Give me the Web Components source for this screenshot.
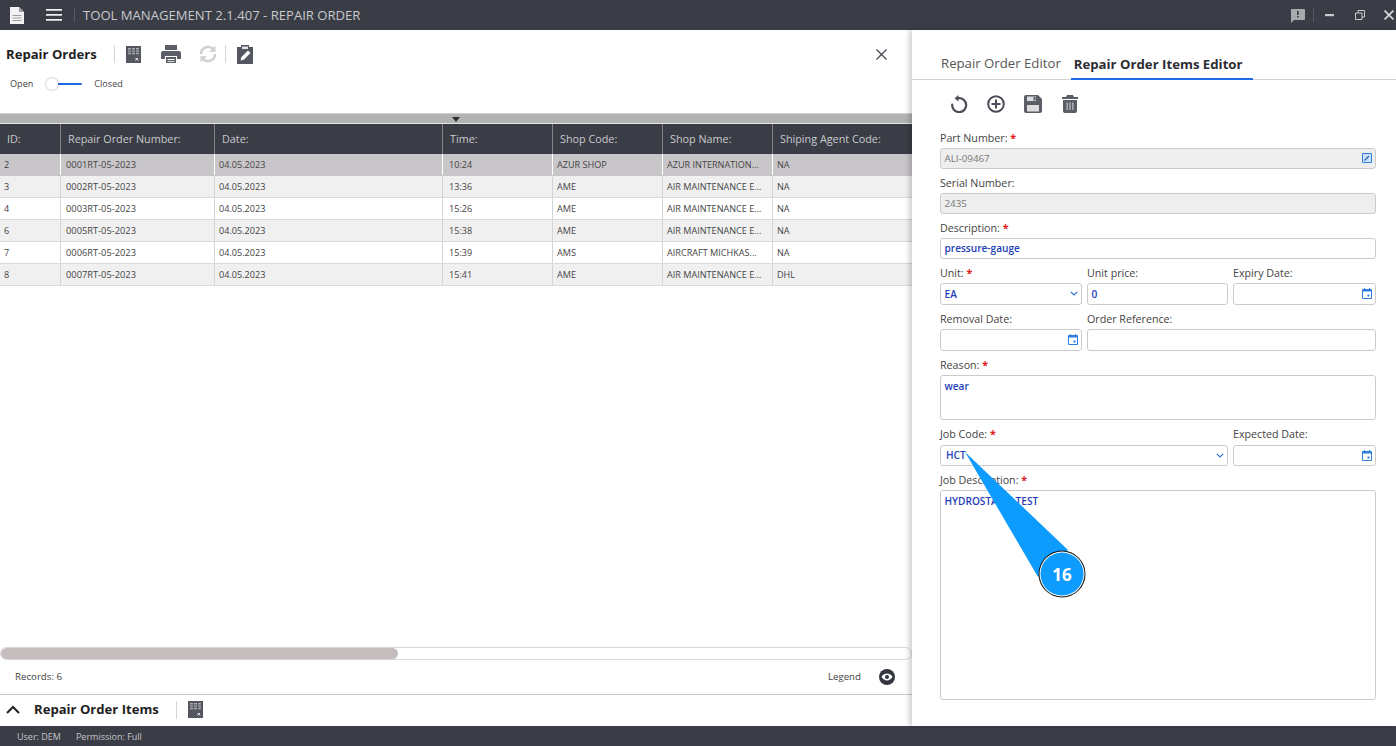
<!DOCTYPE html>
<html lang="en">
<head>
<meta charset="utf-8">
<title>Tool Management - Repair Order</title>
<style>
html,body{margin:0;padding:0;height:100%;overflow:hidden;background:#fff}
body{font-family:"Open Sans","Noto Sans",sans-serif;color:#333}
</style>
</head>
<body>
<app-shell></app-shell>
<script>
const ICONS={
 xls:'<svg viewBox="0 0 15 17" width="15" height="17"><path fill="#54575f" d="M0 0h15v17H0z"/><path fill="#a9abb0" d="M2 2h3v1.400H2zM6 2h3v1.400H6zM10 2h3v1.400h-3zM2 4.400h3v1.400H2zM6 4.400h3v1.400H6zM10 4.400h3v1.400h-3zM2 6.800h3v1.400H2zM6 6.800h3v1.400H6zM10 6.800h3v1.400h-3z"/><path stroke="#fff" stroke-width="1" d="M9.500 12l2.500 2.500M12 12l-2.500 2.500"/></svg>',
 print:'<svg viewBox="0 0 20 18" width="20" height="18"><path fill="#5b5e66" d="M4 0h12v5H4zM2 6h16a2 2 0 0 1 2 2v6h-4v-3H4v3H0V8a2 2 0 0 1 2-2z"/><path fill="#5b5e66" d="M5 12h10v6H5z"/><path fill="#fff" d="M6.500 14h7v1h-7zM6.500 16h7v.8h-7z"/></svg>',
 sync:'<svg viewBox="0 0 20 20" width="20" height="20" fill="none"><path stroke="#d2d2d4" stroke-width="2.600" d="M3 10a7 7 0 0 1 12-5M17 10a7 7 0 0 1-12 5"/><path fill="#d2d2d4" d="M17.500 1.500v6.500h-6.500zM2.500 18.500V12h6.500z"/></svg>',
 clip:'<svg viewBox="0 0 16 19" width="16" height="19"><path fill="#54575f" d="M0 2h4V0h8v2h4v17H0z"/><path fill="#e4e4e6" d="M5 1.500h6V4H5z"/><path fill="#fff" d="M3.500 15.500l1-3.500 6.500-6.500 2.500 2.500L7 14.500z"/></svg>',
 undo:'<svg viewBox="0 0 18 18" width="18" height="18" fill="none"><path stroke="#4c4f57" stroke-width="2.200" stroke-linecap="round" d="M8.500 3.200A7 7 0 1 1 2.200 9.500"/><path fill="#4c4f57" d="M8.500 0v6.400L4.500 3.200z"/></svg>',
 add:'<svg viewBox="0 0 18 18" width="18" height="18" fill="none" stroke="#4c4f57" stroke-width="2"><circle cx="9" cy="9" r="7.800"/><path d="M9 4.500v9M4.500 9h9"/></svg>',
 save:'<svg viewBox="0 0 18 18" width="18" height="18"><path fill="#5b5e66" d="M2 0h12l4 4v12a2 2 0 0 1-2 2H2a2 2 0 0 1-2-2V2a2 2 0 0 1 2-2z"/><path fill="#dcdcde" d="M3 1.500h9v4.500H3z"/><path fill="#5b5e66" d="M9.500 2h2v3.500h-2z"/><path fill="#dcdcde" d="M3 10h12v6.500H3z"/></svg>',
 trash:'<svg viewBox="0 0 16 18" width="16" height="18"><path fill="#5b5e66" d="M5 0h6l1 2h4v2H0V2h4zM1 5h14v11a2 2 0 0 1-2 2H3a2 2 0 0 1-2-2z"/><path fill="#fff" d="M4.500 7.500h1.400V15H4.500zM7.300 7.500h1.400V15H7.300zM10.100 7.500h1.400V15h-1.400z" opacity=".55"/></svg>',
 cal:'<svg viewBox="0 0 10 11" width="10" height="11"><path fill="#2f7de0" d="M2 0h1v1h4V0h1v1h1a1 1 0 0 1 1 1v8a1 1 0 0 1-1 1H1a1 1 0 0 1-1-1V2a1 1 0 0 1 1-1h1z"/><path fill="#fff" d="M1 3.500h8V10H1z"/><path fill="#2f7de0" d="M5.500 6.500h2v2h-2z"/></svg>',
 edit:'<svg viewBox="0 0 10 10" width="10" height="10"><path fill="#cfe2fb" stroke="#2f7de0" d="M.5.500h9v9h-9z"/><path stroke="#1f63c4" stroke-width="1.300" d="M2.500 7.500l4.500-4.500"/></svg>',
 chev:'<svg viewBox="0 0 8 5" width="8" height="5" fill="none"><path stroke="#2f6fcc" stroke-width="1.200" d="M.8.800L4 4l3.200-3.200"/></svg>'
};

class AppIcon extends HTMLElement{
 connectedCallback(){
  if(this.shadowRoot)return;
  const s=this.attachShadow({mode:'open'});
  s.innerHTML='<style>:host{display:inline-flex;align-items:center;justify-content:center;flex:none}svg{display:block}</style>'+(ICONS[this.getAttribute('name')]||'');
 }
}
customElements.define('app-icon',AppIcon);

class TitleBar extends HTMLElement{
 constructor(){super();this.attachShadow({mode:'open'}).innerHTML=`
 <style>
 :host{display:flex;align-items:center;height:30px;background:#3a3d46;color:#c9cacd;font-size:13.1px;flex:none}
 .doc{margin-left:10px;display:flex}
 .menu{margin-left:22px;display:flex}
 .sep{width:1px;height:14px;background:#565962;margin:0 8px 0 12px}
 .title{white-space:nowrap}
 .right{margin-left:auto;display:flex;align-items:center}
 .right svg{display:block}
 .rsep{width:1px;height:14px;background:#565962;margin:0 11px 0 8px}
 </style>
 <span class="doc"><svg width="14" height="17" viewBox="0 0 14 17"><path fill="#f2f2f3" d="M0 0h9l5 5v12H0z"/><path fill="#9a9ca2" d="M9 0l5 5H9zM2.500 8h9v1h-9zM2.500 10.500h9v1h-9zM2.500 13h9v1h-9z"/></svg></span>
 <span class="menu"><svg width="16" height="12" viewBox="0 0 16 12"><path fill="#eeeeef" d="M0 0h16v1.700H0zM0 5h16v1.700H0zM0 10h16v1.700H0z"/></svg></span>
 <span class="sep"></span>
 <span class="title">TOOL MANAGEMENT 2.1.407 - REPAIR ORDER</span>
 <span class="right">
  <svg width="15" height="15" viewBox="0 0 15 15"><path fill="#a8a9ad" d="M1 1h13a1 1 0 0 1 1 1v9a1 1 0 0 1-1 1H4l-3 3z"/><path fill="#3a3d46" d="M7 3h1.600v4H7zM7 8h1.600v1.600H7z"/></svg>
  <span class="rsep"></span>
  <svg style="margin-right:21px" width="9" height="3" viewBox="0 0 9 3"><path fill="#c9cacd" d="M0 0h9v2.200H0z"/></svg>
  <svg style="margin-right:19px" width="10" height="10" viewBox="0 0 10 10" fill="none"><path stroke="#c9cacd" d="M.5 3h6.500v6.500H.5zM3 3V.5h6.500V7H7"/></svg>
  <svg style="margin-right:2px" width="10" height="10" viewBox="0 0 9 9" fill="none"><path stroke="#d8d8da" stroke-width="1.500" d="M.5.500l8 8M8.500.500l-8 8"/></svg>
 </span>`;}
}
customElements.define('title-bar',TitleBar);

class PanelHead extends HTMLElement{
 constructor(){super();this.attachShadow({mode:'open'}).innerHTML=`
 <style>
 :host{display:flex;align-items:center;height:48px;flex:none;padding-left:6px;position:relative}
 b{font-size:13.1px;font-weight:700;color:#222;white-space:nowrap}
 .s{width:1px;height:18px;background:#d6d6d6}
 .x{margin-left:auto;margin-right:25px;display:flex}
 </style>
 <b>Repair Orders</b>
 <span class="s" style="margin:0 11px 0 17px"></span>
 <app-icon name="xls"></app-icon>
 <app-icon name="print" style="margin-left:20px"></app-icon>
 <app-icon name="sync" style="margin-left:17px"></app-icon>
 <span class="s" style="margin:0 11px 0 7px"></span>
 <app-icon name="clip"></app-icon>
 <span class="x"><svg width="11" height="11" viewBox="0 0 11 11" fill="none"><path stroke="#4a4d55" stroke-width="1.400" d="M.5.500l10 10M10.500.500l-10 10"/></svg></span>`;}
}
customElements.define('panel-head',PanelHead);

class ToggleRow extends HTMLElement{
 constructor(){super();this.attachShadow({mode:'open'}).innerHTML=`
 <style>
 :host{display:flex;align-items:center;height:12px;padding-left:10px;font-size:9.1px;color:#444;flex:none;margin-bottom:23px}
 .txt{padding-bottom:2px}
 .t{position:relative;width:36px;height:12px;margin:0 12px 0 13px;display:block}
 .l{position:absolute;left:8px;right:0;top:5px;height:2px;background:#2468e4;border-radius:1px}
 .k{position:absolute;left:0;top:0;width:12px;height:12px;border-radius:50%;background:#fff;box-shadow:0 0 2px rgba(0,0,0,.45)}
 </style>
 <span class="txt">Open</span><span class="t"><span class="l"></span><span class="k"></span></span><span class="txt">Closed</span>`;}
}
customElements.define('toggle-row',ToggleRow);

const COLS=[61,154,228,110,110,110,139];
const GRID_TPL=COLS.map(c=>c+'px').join(' ');
const HEAD=['ID:','Repair Order Number:','Date:','Time:','Shop Code:','Shop Name:','Shiping Agent Code:'];
const ROWS=[
['2','0001RT-05-2023','04.05.2023','10:24','AZUR SHOP','AZUR INTERNATION...','NA'],
['3','0002RT-05-2023','04.05.2023','13:36','AME','AIR MAINTENANCE E...','NA'],
['4','0003RT-05-2023','04.05.2023','15:26','AME','AIR MAINTENANCE E...','NA'],
['6','0005RT-05-2023','04.05.2023','15:38','AME','AIR MAINTENANCE E...','NA'],
['7','0006RT-05-2023','04.05.2023','15:39','AMS','AIRCRAFT MICHKAS...','NA'],
['8','0007RT-05-2023','04.05.2023','15:41','AME','AIR MAINTENANCE E...','DHL']];

class DataGrid extends HTMLElement{
 constructor(){super();
 const cells=r=>r.map(c=>`<span class="c">${c}</span>`).join('');
 this.attachShadow({mode:'open'}).innerHTML=`
 <style>
 :host{display:flex;flex-direction:column;flex:1;min-height:0}
 .grip{background:#b3b3b3;border-top:1px solid #d4d4d4;border-bottom:1px solid #e4e4e4;height:9px;display:flex;justify-content:center;align-items:center;flex:none}
 .grip i{width:0;height:0;border-left:4px solid transparent;border-right:4px solid transparent;border-top:5px solid #2e3138;display:block;margin-top:1px}
 .row{display:grid;grid-template-columns:${GRID_TPL};flex:none}
 .h{background:#3a3d46;color:#c9cacd;font-size:10.8px;height:30px}
 .h .c{display:flex;align-items:center;padding:0 0 2px 7px;border-right:1px solid #83858b;box-sizing:border-box;white-space:nowrap;overflow:hidden}
 .h .c:last-child{border:0}
 .r{height:22px;font-size:9.1px;color:#444;border-bottom:1px solid #d9d9d9;box-sizing:border-box}
 .r .c{display:flex;align-items:center;padding-left:4px;border-right:1px solid #d4d4d4;box-sizing:border-box;white-space:nowrap;overflow:hidden}
 .r .c:nth-child(2){padding-left:5px;font-size:9.3px}
 .r .c:nth-child(4){padding-left:6px}
 .r .c:last-child{border:0}
 .r.sel{border-bottom-color:#c9c6c9}
 .r.sel .c{border-right-color:#fff}
 .space{flex:1}
 .scroll{height:13px;flex:none;border:1px solid #d9d6d6;border-radius:7px;box-sizing:border-box;overflow:hidden;display:flex}
 .scroll i{display:block;width:397px;background:#c5bdbd;border-radius:6px}
 </style>
 <div class="grip"><i></i></div>
 <div class="row h">${cells(HEAD)}</div>
 ${ROWS.map((r,i)=>`<div class="row r ${i==0?'sel':''}" style="background:${i==0?'#c9c6c9':(i%2?'#f0f0f0':'#fff')}">${cells(r)}</div>`).join('')}
 <div class="space"></div>
 <div class="scroll"><i></i></div>`;}
}
customElements.define('data-grid',DataGrid);

class GridFooter extends HTMLElement{
 constructor(){super();this.attachShadow({mode:'open'}).innerHTML=`
 <style>
 :host{display:flex;align-items:center;height:35px;flex:none;font-size:9.7px;color:#444;padding:0 17px 1px 15px;border-bottom:1px solid #cbc8c8;box-sizing:border-box}
 .g{margin-left:auto;margin-right:18px}
 svg{display:block}
 </style>
 <span>Records: 6</span><span class="g">Legend</span>
 <svg width="16" height="16" viewBox="0 0 16 16"><circle cx="8" cy="8" r="8" fill="#33363e"/><path fill="#fff" d="M2.500 8c1.500-2.400 3.400-3.400 5.500-3.400S12 5.600 13.500 8c-1.500 2.400-3.400 3.400-5.500 3.400S4 10.400 2.500 8z"/><circle cx="8" cy="8" r="2" fill="#33363e"/></svg>`;}
}
customElements.define('grid-footer',GridFooter);

class ItemsBar extends HTMLElement{
 constructor(){super();this.attachShadow({mode:'open'}).innerHTML=`
 <style>
 :host{display:flex;align-items:center;height:31px;flex:none;padding:0 0 2px 6px;box-sizing:border-box}
 b{font-size:13.1px;font-weight:700;color:#222;margin-left:14px;white-space:nowrap;padding-bottom:2px}
 .s{width:1px;height:18px;background:#d6d6d6;margin:0 11px 0 17px}
 svg{display:block}
 </style>
 <svg width="14" height="9" viewBox="0 0 14 9" fill="none"><path stroke="#222" stroke-width="2" d="M1 8l6-6 6 6"/></svg>
 <b>Repair Order Items</b><span class="s"></span><app-icon name="xls"></app-icon>`;}
}
customElements.define('items-bar',ItemsBar);

class OrdersPanel extends HTMLElement{
 constructor(){super();this.attachShadow({mode:'open'}).innerHTML=`
 <style>:host{display:flex;flex-direction:column;width:912px;flex:none;min-height:0}</style>
 <panel-head></panel-head><toggle-row></toggle-row><data-grid></data-grid><grid-footer></grid-footer><items-bar></items-bar>`;}
}
customElements.define('orders-panel',OrdersPanel);

class EditorTabs extends HTMLElement{
 constructor(){super();this.attachShadow({mode:'open'}).innerHTML=`
 <style>
 :host{display:flex;height:50px;flex:none;border-bottom:1px solid #d4d2d2;box-sizing:border-box;padding-left:29px;font-size:13.2px;align-items:flex-end}
 span{display:block;height:30px;line-height:28px;white-space:nowrap;box-sizing:border-box;color:#555}
 .on{color:#2b2d33;font-weight:700;border-bottom:2px solid #1f6ae6;padding:0 10px 0 3px;margin-left:10px;font-size:13.2px;margin-bottom:-1px;height:31px;line-height:30px}
 </style>
 <span>Repair Order Editor</span><span class="on">Repair Order Items Editor</span>`;}
}
customElements.define('editor-tabs',EditorTabs);

class FormField extends HTMLElement{
 constructor(){super();this.attachShadow({mode:'open'});}
 connectedCallback(){
  const a=n=>this.getAttribute(n);
  const h=a('h')||21, icon=a('icon'), ro=this.hasAttribute('ro'), ml=h>30;
  const bold=!ro;
  this.shadowRoot.innerHTML=`
  <style>
  :host{display:flex;flex-direction:column;min-width:0;grid-column:span ${a('span')||1}}
  label{display:block;height:18px;line-height:${a('lh')||16}px;font-size:10.7px;color:#444;white-space:nowrap}
  label b{color:#e02020;font-weight:700}
  .box{box-sizing:border-box;height:${h}px;border:1px solid #cfcaca;border-radius:3px;background:${ro?'#eeeeee':'#fff'};display:flex;align-items:${ml?'flex-start':'center'};justify-content:space-between;padding:${ml?'3px':'0'} 3px ${ml?'0':'1px'} ${a('pl')||3.5}px;font-size:${ro?9.8:10.1}px;color:${ro?'#777':'#2340b8'};font-weight:${bold?600:400}}
  </style>
  <label>${a('label')}${this.hasAttribute('req')?' <b>*</b>':''}</label>
  <div class="box"><span>${a('value')||''}</span>${icon?`<app-icon name="${icon}"></app-icon>`:''}</div>`;
 }
}
customElements.define('form-field',FormField);

class EditorPanel extends HTMLElement{
 constructor(){super();this.attachShadow({mode:'open'}).innerHTML=`
 <style>
 :host{display:flex;flex-direction:column;flex:1;min-width:0;box-shadow:-3px 0 5px rgba(0,0,0,.18);position:relative}
 .tools{display:flex;align-items:center;height:48px;margin-bottom:2px;flex:none;padding-left:38px}
 .form{display:grid;grid-template-columns:142px 141px 143px;column-gap:5px;row-gap:6px;padding:0 20px 0 28px;width:436px;box-sizing:content-box;grid-template-rows:39px 39px 39px 40px 40px 64px 39px 228px}
 </style>
 <editor-tabs></editor-tabs>
 <div class="tools"><app-icon name="undo"></app-icon><app-icon name="add" style="margin-left:19px"></app-icon><app-icon name="save" style="margin-left:19px"></app-icon><app-icon name="trash" style="margin-left:20px"></app-icon></div>
 <div class="form">
  <form-field span="3" label="Part Number:" req ro value="ALI-09467" icon="edit"></form-field>
  <form-field span="3" label="Serial Number:" ro value="2435"></form-field>
  <form-field span="3" label="Description:" req value="pressure-gauge"></form-field>
  <form-field label="Unit:" req value="EA" icon="chev" h="22"></form-field>
  <form-field label="Unit price:" value="0" h="22"></form-field>
  <form-field label="Expiry Date:" icon="cal" h="22"></form-field>
  <form-field label="Removal Date:" icon="cal" h="22"></form-field>
  <form-field span="2" label="Order Reference:" h="22"></form-field>
  <form-field span="3" label="Reason:" req value="wear" h="45"></form-field>
  <form-field span="2" label="Job Code:" req value="HCT" icon="chev" pl="5" lh="14"></form-field>
  <form-field label="Expected Date:" icon="cal" lh="14"></form-field>
  <form-field span="3" label="Job Description:" req value="HYDROSTATIC TEST" h="210"></form-field>
 </div>`;}
}
customElements.define('editor-panel',EditorPanel);

class StatusBar extends HTMLElement{
 constructor(){super();this.attachShadow({mode:'open'}).innerHTML=`
 <style>:host{display:flex;align-items:center;gap:15px;height:20px;flex:none;background:#3a3d46;color:#c4c5c9;font-size:9px;padding-left:17px}</style>
 <span>User: DEM</span><span>Permission: Full</span>`;}
}
customElements.define('status-bar',StatusBar);

class CalloutBadge extends HTMLElement{
 constructor(){super();this.attachShadow({mode:'open'}).innerHTML=`
 <style>
 :host{display:block;position:absolute;left:0;top:0;width:1396px;height:746px;pointer-events:none}
 svg{position:absolute;left:0;top:0}
 .n{position:absolute;left:1040px;top:552px;width:44px;height:44px;display:flex;align-items:center;justify-content:center;font-size:17px;font-weight:700;color:#fff}
 </style>
 <svg width="1396" height="746"><path fill="#0d9bfd" d="M965 452L1068 550L1038 577z"/><circle cx="1062" cy="574" r="23.500" fill="#111"/><circle cx="1062" cy="574" r="22.500" fill="#fff"/><circle cx="1062" cy="574" r="21.500" fill="#0d9bfd"/></svg>
 <span class="n">16</span>`;}
}
customElements.define('callout-badge',CalloutBadge);

class AppShell extends HTMLElement{
 constructor(){super();this.attachShadow({mode:'open'}).innerHTML=`
 <style>
 :host{display:flex;flex-direction:column;width:1396px;height:746px;position:relative;overflow:hidden;background:#fff}
 .main{display:flex;flex:1;min-height:0}
 </style>
 <title-bar></title-bar>
 <div class="main"><orders-panel></orders-panel><editor-panel></editor-panel></div>
 <status-bar></status-bar>
 <callout-badge></callout-badge>`;}
}
customElements.define('app-shell',AppShell);
</script>
</body>
</html>
